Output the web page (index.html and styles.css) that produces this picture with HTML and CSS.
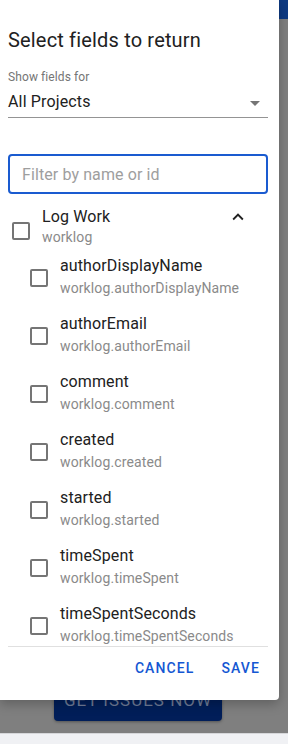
FILE: index.html
```html
<!DOCTYPE html>
<html>
<head>
<meta charset="utf-8">
<link rel="stylesheet" href="styles.css">
</head>
<body>
<div class="page">
  <div class="topbar"></div>
  <div class="page-body">
    <button class="get-btn">GET ISSUES NOW</button>
  </div>
  <div class="page-foot"></div>
</div>

<div class="dialog">
  <h1 class="title">Select fields to return</h1>
  <div class="field-label">Show fields for</div>
  <div class="select">
    <span class="select-value">All Projects</span>
    <span class="select-arrow"></span>
  </div>
  <input class="filter" type="text" placeholder="Filter by name or id">
  <div class="list">
    <div class="group">
      <span class="cb"></span>
      <div class="texts">
        <div class="name">Log Work</div>
        <div class="id">worklog</div>
      </div>
      <svg class="chev" viewBox="0 0 24 24" width="22" height="22"><path d="M7.41 15.41L12 10.83l4.59 4.58L18 14l-6-6-6 6z" fill="#212121"/></svg>
    </div>
    <div class="item"><span class="cb"></span><div class="texts"><div class="name">authorDisplayName</div><div class="id">worklog.authorDisplayName</div></div></div>
    <div class="item"><span class="cb"></span><div class="texts"><div class="name">authorEmail</div><div class="id">worklog.authorEmail</div></div></div>
    <div class="item"><span class="cb"></span><div class="texts"><div class="name">comment</div><div class="id">worklog.comment</div></div></div>
    <div class="item"><span class="cb"></span><div class="texts"><div class="name">created</div><div class="id">worklog.created</div></div></div>
    <div class="item"><span class="cb"></span><div class="texts"><div class="name">started</div><div class="id">worklog.started</div></div></div>
    <div class="item"><span class="cb"></span><div class="texts"><div class="name">timeSpent</div><div class="id">worklog.timeSpent</div></div></div>
    <div class="item"><span class="cb"></span><div class="texts"><div class="name">timeSpentSeconds</div><div class="id">worklog.timeSpentSeconds</div></div></div>
  </div>
  <div class="actions">
    <button class="act">CANCEL</button>
    <button class="act">SAVE</button>
  </div>
</div>
</body>
</html>
```

FILE: styles.css
```css
* { box-sizing: border-box; }
html, body { margin: 0; padding: 0; }
body {
  width: 288px;
  height: 744px;
  overflow: hidden;
  background: #7f7f7f;
  font-family: Roboto, "Noto Sans", sans-serif;
  color: #212121;
  position: relative;
}
.page {
  height: 744px;
  display: flex;
  flex-direction: column;
}
.topbar {
  height: 19px;
  background: #0e3a82;
}
.page-body {
  flex: 1;
  display: flex;
  align-items: flex-end;
  padding-left: 54px;
  padding-bottom: 12px;
}
.get-btn {
  width: 168px;
  height: 42px;
  border: none;
  border-radius: 4px;
  background: #011e59;
  color: #6f7c97;
  font-family: Roboto, sans-serif;
  font-size: 17px;
  letter-spacing: 1px;
  line-height: 36px;
  box-shadow: 0 1px 3px rgba(0,0,0,0.35);
  padding: 0;
}
.page-foot {
  height: 11px;
  background: #f0f1f4;
  border-top: 1px solid #d6d7da;
}

.dialog {
  position: absolute;
  left: 0;
  top: 0;
  width: 279px;
  height: 700px;
  background: #fff;
  border-bottom-right-radius: 4px;
  box-shadow: 0 4px 12px rgba(0,0,0,0.25);
  padding: 28px 11px 0 8px;
  display: flex;
  flex-direction: column;
}
.title {
  margin: 0;
  font-size: 20px;
  font-weight: 400;
  line-height: 24px;
  letter-spacing: 0.17px;
  color: #212121;
}
.field-label {
  margin-top: 17px;
  font-size: 12px;
  line-height: 16px;
  letter-spacing: 0.1px;
  color: #757575;
}
.select {
  margin-top: 5px;
  height: 28px;
  border-bottom: 1px solid #949494;
  display: flex;
  justify-content: space-between;
  align-items: flex-start;
}
.select-value {
  font-size: 16px;
  line-height: 24px;
  letter-spacing: 0.15px;
  color: #212121;
}
.select-arrow {
  margin-top: 11px;
  margin-right: 8px;
  width: 0;
  height: 0;
  border-left: 5px solid transparent;
  border-right: 5px solid transparent;
  border-top: 5px solid #757575;
}
.filter {
  margin-top: 36px;
  width: 260px;
  height: 40px;
  border: 2px solid #1a5bd0;
  border-radius: 4px;
  padding: 0 12px;
  font-family: Roboto, sans-serif;
  font-size: 16px;
  letter-spacing: 0.1px;
  color: #212121;
  outline: none;
}
.filter::placeholder { color: #9e9e9e; }
.list {
  margin-top: 7px;
  height: 445px;
  overflow: hidden;
}
.group {
  display: flex;
  align-items: flex-start;
  padding-top: 4px;
  height: 45px;
}
.group .cb {
  margin-left: 4px;
  margin-top: 17px;
}
.group .texts { margin-left: 12px; flex: 1; }
.group .id { line-height: 17px; }
.chev { margin-top: 1px; margin-right: 19px; }
.item {
  display: flex;
  align-items: center;
  height: 58px;
  padding: 8px 0 6px;
}
.item .cb { margin-left: 22px; margin-top: 4px; }
.item .texts { margin-left: 12px; }
.cb {
  flex: none;
  width: 18px;
  height: 18px;
  border: 2px solid #757575;
  border-radius: 2px;
}
.name {
  font-size: 16px;
  line-height: 24px;
  letter-spacing: 0.12px;
  color: #212121;
}
.id {
  font-size: 14px;
  line-height: 20px;
  letter-spacing: 0.12px;
  color: #8a8a8a;
}
.actions {
  border-top: 1px solid #e0e0e0;
  padding-top: 3px;
  display: flex;
  justify-content: flex-end;
  gap: 11px;
}
.act {
  height: 36px;
  padding: 0 8px;
  border: none;
  background: none;
  font-family: Roboto, sans-serif;
  font-size: 14px;
  font-weight: 500;
  letter-spacing: 1.1px;
  color: #1557d3;
}
```
